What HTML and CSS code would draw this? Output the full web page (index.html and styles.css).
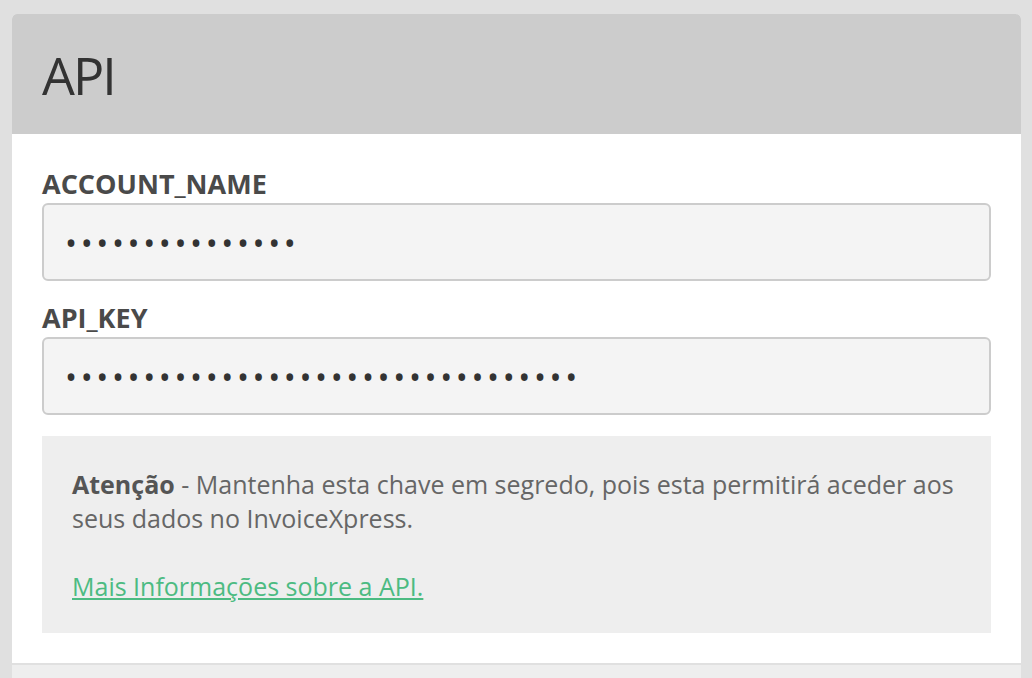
FILE: index.html
```html
<!DOCTYPE html>
<html lang="pt">
<head>
    <meta charset="UTF-8">
    <meta name="viewport" content="width=device-width, initial-scale=1.0">
    <title>API</title>
    <link rel="stylesheet" href="styles.css">
</head>
<body>
    <div class="card">
        <div class="card-header">
            <h1>API</h1>
        </div>
        <div class="card-body">
            <div class="field">
                <label for="accountName">ACCOUNT_NAME</label>
                <input type="password" id="accountName" value="abcdefghijklmno" readonly>
            </div>
            <div class="field">
                <label for="apiKey">API_KEY</label>
                <input type="password" id="apiKey" value="abcdefghijklmnopqrstuvwxyz0123456" readonly>
            </div>
            <div class="notice">
                <p><strong>Atenção</strong> - Mantenha esta chave em segredo, pois esta permitirá aceder aos seus dados no InvoiceXpress.</p>
                <p><a href="#">Mais Informações sobre a API.</a></p>
            </div>
        </div>
        <div class="card-footer"></div>
    </div>
</body>
</html>
```

FILE: styles.css
```css
body {
    margin: 0;
    padding: 14px 11px 0 12px;
    background-color: #e0e0e0;
    font-family: "Open Sans", "Noto Sans", sans-serif;
    color: #666;
}
.card {
    background-color: #fff;
    border-radius: 5px 5px 0 0;
    overflow: hidden;
}
.card-header {
    background-color: #ccc;
    height: 120px;
    padding: 0 30px;
    display: flex;
    align-items: center;
}
.card-header h1 {
    margin: 0;
    font-size: 52px;
    font-weight: 400;
    letter-spacing: -2px;
    color: #333;
}
.card-body {
    padding: 30px 30px 30px;
}
.field {
    margin-bottom: 17px;
}
.field label {
    display: block;
    padding-top: 4px;
    font-size: 27px;
    line-height: 32px;
    font-weight: 700;
    color: #4a4a4a;
    margin-bottom: 3px;
}
.field input {
    display: block;
    box-sizing: border-box;
    width: 100%;
    height: 78px;
    padding: 0 21px;
    background-color: #f4f4f4;
    border: 2px solid #ccc;
    border-radius: 6px;
    font-family: "Open Sans", sans-serif;
    font-size: 32px;
    letter-spacing: 3.6px;
    color: #333;
    outline: none;
}
.notice {
    margin-top: 21px;
    background-color: #eee;
    padding: 31px 30px 30px;
    font-size: 25px;
    line-height: 34px;
}
.notice p {
    margin: 0;
}
.notice p + p {
    margin-top: 34px;
}
.notice strong {
    color: #555;
}
.notice a {
    color: #4cbb82;
}
.card-footer {
    border-top: 2px solid #e0e0e0;
    background-color: #eee;
    height: 20px;
}
```
